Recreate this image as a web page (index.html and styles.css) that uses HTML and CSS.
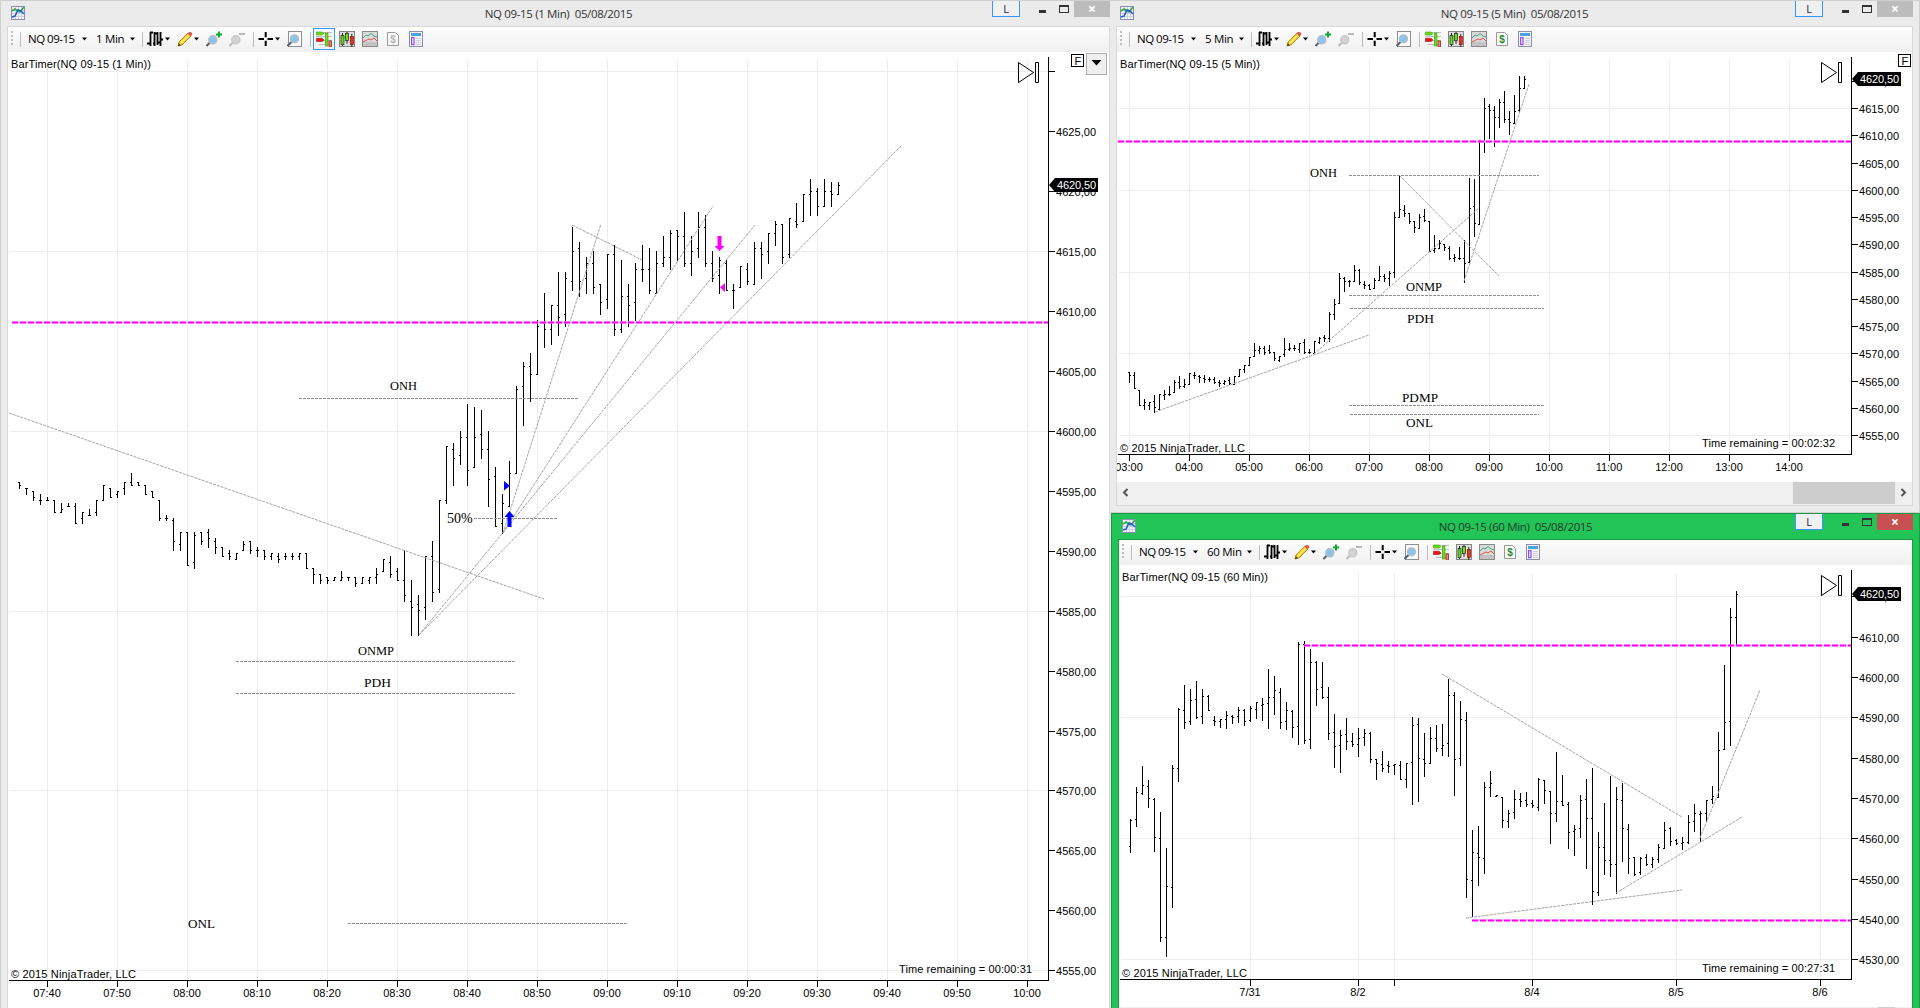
FILE: index.html
```html
<!DOCTYPE html>
<html lang="en">
<head>
    <meta charset="UTF-8">
    <title>NinjaTrader Charts</title>
    <link rel="stylesheet" href="styles.css">
</head>
<body>
    <!-- shared icons -->
    <svg class="defs" width="0" height="0">
        <symbol id="i-app" viewBox="0 0 14 14">
            <rect x="0.5" y="0.5" width="13" height="13" fill="#f4f4fb" stroke="#8c8cb4"/>
            <path d="M1 4.5H13M1 7.5H13M1 10.5H13M4.5 1V13M7.5 1V13M10.5 1V13" stroke="#cfcfe6" fill="none"/>
            <path d="M1 5L4 3L7 5L9 6L13 1" stroke="#2fae2f" stroke-width="1.6" fill="none"/>
            <path d="M1 11L4 10L7 4L10 5L13 8" stroke="#1f5fcf" stroke-width="1.6" fill="none"/>
        </symbol>
        <symbol id="i-arrow" viewBox="0 0 7 4"><path d="M1 0.5H6L3.5 3.5Z" fill="#000"/></symbol>
        <symbol id="i-bars" viewBox="0 0 16 16">
            <path d="M0 12.5H3M3 1.5H6M3.5 1V15M6 12.5H8M7.5 1V15M7.5 2.5H11M10.5 1V14M13.5 1V15M10 11.5H13M13 8.5H16" stroke="#000" stroke-width="1.8" fill="none"/>
        </symbol>
        <symbol id="i-pencil" viewBox="0 0 16 16">
            <path d="M1 15L2 11L11 2L14 5L5 14Z" fill="#f6cf1e" stroke="#a67c12" stroke-width="0.8"/>
            <path d="M3.5 12.5L12.3 3.6" stroke="#fff08a" stroke-width="1.2"/>
            <path d="M10.5 2.5L12 1Q14 0.5 15 2Q15.6 3.4 15 4L13.5 5.5Z" fill="#e0574d"/>
            <path d="M1 15L1.8 12L4 14.2Z" fill="#4a3b1c"/>
        </symbol>
        <symbol id="i-zoomin" viewBox="0 0 16 16">
            <path d="M0.5 15L4 11.5" stroke="#55606e" stroke-width="2"/>
            <circle cx="6.8" cy="8.8" r="4.1" fill="#8ec3ea" stroke="#b4bdc6" stroke-width="1.3"/>
            <path d="M10 3.5H16M13 0.5V6.5" stroke="#0aa82c" stroke-width="2"/>
        </symbol>
        <symbol id="i-zoomout" viewBox="0 0 16 16">
            <path d="M0.5 15L4 11.5" stroke="#bcbcbc" stroke-width="2"/>
            <circle cx="6.8" cy="8.8" r="4.1" fill="#d2d2d2" stroke="#c8c8c8" stroke-width="1.3"/>
            <path d="M10 3H16" stroke="#b9b9b9" stroke-width="2"/>
        </symbol>
        <symbol id="i-cross" viewBox="0 0 16 16">
            <path d="M0.5 8H6M9.5 8H15M7.7 1V6.3M7.7 9.7V15" stroke="#000" stroke-width="2"/>
        </symbol>
        <symbol id="i-frame" viewBox="0 0 16 16">
            <rect x="1.5" y="0.5" width="13" height="15" fill="#fafafa" stroke="#8f8f8f"/>
            <path d="M0.5 15L4.5 11" stroke="#55606e" stroke-width="2"/>
            <circle cx="7.5" cy="7.8" r="4" fill="#8ec3ea" stroke="#b4bdc6" stroke-width="1.3"/>
        </symbol>
        <symbol id="i-trader" viewBox="0 0 16 16">
            <path d="M3 1.5H16M0 5.5H16M3 9.5H16M3 13.5H16" stroke="#bdbdbd"/>
            <path d="M0.5 1H6L8 2.5L6 4H0.5Z" fill="#62e010" stroke="#3f9a10" stroke-width="0.6"/>
            <path d="M8 9L6 7.3H0.5V10.5H6Z" fill="#e81818" stroke="#9c1010" stroke-width="0.6"/>
            <rect x="9.4" y="2" width="2.6" height="13" fill="#62e010" stroke="#3f9a10" stroke-width="0.6"/>
            <rect x="13" y="10" width="2.4" height="6" fill="#f08080" stroke="#a02020" stroke-width="0.8"/>
        </symbol>
        <symbol id="i-candles" viewBox="0 0 16 16">
            <rect x="0.5" y="0.5" width="15" height="15" fill="#dcdcdc" stroke="#858585"/>
            <path d="M1 4.5H15M1 8.5H15M1 12.5H15" stroke="#fff"/>
            <path d="M3.5 2V15M8 1V13M12.8 3V16" stroke="#222"/>
            <rect x="2" y="4.5" width="3" height="9" fill="#62e010" stroke="#222" stroke-width="0.7"/>
            <rect x="6.5" y="2.5" width="3" height="7" fill="#62e010" stroke="#222" stroke-width="0.7"/>
            <rect x="11.3" y="5.5" width="3" height="8" fill="#f03020" stroke="#7c1010" stroke-width="0.7"/>
        </symbol>
        <symbol id="i-lines" viewBox="0 0 16 16">
            <rect x="0.5" y="0.5" width="15" height="15" fill="#dadada" stroke="#8a8a8a"/>
            <rect x="1" y="11" width="14" height="4" fill="#c2c2c2"/>
            <path d="M1 7L4 4L6 5L9 2.5L12 5L15 6" stroke="#3bab7c" fill="none"/>
            <path d="M1 11L4 9.5L7 8L9 9L12 7L15 10" stroke="#e05252" fill="none"/>
        </symbol>
        <symbol id="i-dollar" viewBox="0 0 16 16">
            <path d="M2.5 1.5H10.5L13.5 4.5V14.5H2.5Z" fill="#f8f8f8" stroke="#9a9a9a"/>
            <text class="dollar" x="8" y="12" text-anchor="middle">$</text>
        </symbol>
        <symbol id="i-props" viewBox="0 0 16 16">
            <rect x="1.5" y="0.5" width="13" height="15" fill="#f2f2f8" stroke="#8d90a8"/>
            <rect x="3" y="2" width="10" height="3" fill="#4aa3dd"/>
            <rect x="3.6" y="6.6" width="2.4" height="7" fill="#f1e4ff" stroke="#9252ee" stroke-width="1.2"/>
            <path d="M8 7.5H13M8 9.5H13M8 11.5H13M8 13.5H13" stroke="#d0d0dc"/>
        </symbol>
    </svg>

    <div class="desktop">
        <div class="window win-1min">
            <div class="titlebar">
                <svg class="app-icon"><use href="#i-app"/></svg>
                <div class="title">NQ 09-15 (1 Min)&nbsp; 05/08/2015</div>
                <div class="controls">
                    <span class="link-btn">L</span><span class="min"></span><span class="max"></span><span class="close">×</span>
                </div>
            </div>
            <div class="content">
                <div class="toolbar">
                    <span class="grip"></span><span class="sep first"></span>
                    <span class="instrument">NQ 09-15</span><svg class="arrow"><use href="#i-arrow"/></svg>
                    <span class="interval">1 Min</span><svg class="arrow"><use href="#i-arrow"/></svg>
                    <span class="sep"></span>
                    <svg class="icon bars-icon"><use href="#i-bars"/></svg><svg class="arrow"><use href="#i-arrow"/></svg>
                    <svg class="icon after"><use href="#i-pencil"/></svg><svg class="arrow"><use href="#i-arrow"/></svg>
                    <svg class="icon after"><use href="#i-zoomin"/></svg>
                    <svg class="icon next"><use href="#i-zoomout"/></svg>
                    <span class="sep wide"></span>
                    <svg class="icon"><use href="#i-cross"/></svg><svg class="arrow"><use href="#i-arrow"/></svg>
                    <svg class="icon after"><use href="#i-frame"/></svg>
                    <span class="sep wide last"></span>
                    <span class="selected"><svg class="icon"><use href="#i-trader"/></svg></span>
                    <svg class="icon next"><use href="#i-candles"/></svg>
                    <svg class="icon next"><use href="#i-lines"/></svg>
                    <svg class="icon next disabled"><use href="#i-dollar"/></svg>
                    <svg class="icon next"><use href="#i-props"/></svg>
                </div>
                <svg class="chart" id="chart1" width="1101" height="956" viewBox="8 52 1101 956"></svg>
            </div>
        </div>

        <div class="side">
            <div class="window win-5min">
                <div class="titlebar">
                    <svg class="app-icon"><use href="#i-app"/></svg>
                    <div class="title">NQ 09-15 (5 Min)&nbsp; 05/08/2015</div>
                    <div class="controls">
                        <span class="link-btn">L</span><span class="min"></span><span class="max"></span><span class="close">×</span>
                    </div>
                </div>
                <div class="content">
                    <div class="toolbar">
                        <span class="grip"></span><span class="sep first"></span>
                        <span class="instrument">NQ 09-15</span><svg class="arrow"><use href="#i-arrow"/></svg>
                        <span class="interval">5 Min</span><svg class="arrow"><use href="#i-arrow"/></svg>
                        <span class="sep"></span>
                        <svg class="icon bars-icon"><use href="#i-bars"/></svg><svg class="arrow"><use href="#i-arrow"/></svg>
                        <svg class="icon after"><use href="#i-pencil"/></svg><svg class="arrow"><use href="#i-arrow"/></svg>
                        <svg class="icon after"><use href="#i-zoomin"/></svg>
                        <svg class="icon next"><use href="#i-zoomout"/></svg>
                        <span class="sep wide"></span>
                        <svg class="icon"><use href="#i-cross"/></svg><svg class="arrow"><use href="#i-arrow"/></svg>
                        <svg class="icon after"><use href="#i-frame"/></svg>
                        <span class="sep wide last"></span>
                        <svg class="icon"><use href="#i-trader"/></svg>
                        <svg class="icon next"><use href="#i-candles"/></svg>
                        <svg class="icon next"><use href="#i-lines"/></svg>
                        <svg class="icon next money"><use href="#i-dollar"/></svg>
                        <svg class="icon next"><use href="#i-props"/></svg>
                    </div>
                    <svg class="chart" id="chart5" width="795" height="430" viewBox="1117 52 795 430"></svg>
                    <div class="scrollbar">
                        <svg class="chevron" viewBox="0 0 17 22"><path d="M10.5 7L7 10.5L10.5 14"/></svg>
                        <div class="thumb"></div>
                        <svg class="chevron" viewBox="0 0 17 22"><path d="M6.5 7L10 10.5L6.5 14"/></svg>
                    </div>
                </div>
            </div>

            <div class="window win-60min active">
                <div class="titlebar">
                    <svg class="app-icon"><use href="#i-app"/></svg>
                    <div class="title">NQ 09-15 (60 Min)&nbsp; 05/08/2015</div>
                    <div class="controls">
                        <span class="link-btn">L</span><span class="min"></span><span class="max"></span><span class="close">×</span>
                    </div>
                </div>
                <div class="content">
                    <div class="toolbar">
                        <span class="grip"></span><span class="sep first"></span>
                        <span class="instrument">NQ 09-15</span><svg class="arrow"><use href="#i-arrow"/></svg>
                        <span class="interval long">60 Min</span><svg class="arrow"><use href="#i-arrow"/></svg>
                        <span class="sep"></span>
                        <svg class="icon bars-icon"><use href="#i-bars"/></svg><svg class="arrow"><use href="#i-arrow"/></svg>
                        <svg class="icon after"><use href="#i-pencil"/></svg><svg class="arrow"><use href="#i-arrow"/></svg>
                        <svg class="icon after"><use href="#i-zoomin"/></svg>
                        <svg class="icon next"><use href="#i-zoomout"/></svg>
                        <span class="sep wide"></span>
                        <svg class="icon"><use href="#i-cross"/></svg><svg class="arrow"><use href="#i-arrow"/></svg>
                        <svg class="icon after"><use href="#i-frame"/></svg>
                        <span class="sep wide last"></span>
                        <svg class="icon"><use href="#i-trader"/></svg>
                        <svg class="icon next"><use href="#i-candles"/></svg>
                        <svg class="icon next"><use href="#i-lines"/></svg>
                        <svg class="icon next money"><use href="#i-dollar"/></svg>
                        <svg class="icon next"><use href="#i-props"/></svg>
                    </div>
                    <svg class="chart" id="chart60" width="793" height="442" viewBox="1119 565 793 442"></svg>
                    <div class="scrollbar">
                        <svg class="chevron" viewBox="0 0 17 22"><path d="M10.5 7L7 10.5L10.5 14"/></svg>
                        <div class="thumb short"></div>
                        <svg class="chevron" viewBox="0 0 17 22"><path d="M6.5 7L10 10.5L6.5 14"/></svg>
                    </div>
                </div>
            </div>
        </div>
    </div>
    <script src="charts.js"></script>
</body>
</html>
```
FILE: styles.css
```css
body {
    margin: 0;
    background-color: #ebebeb;
    font-family: "Open Sans", "Noto Sans", sans-serif;
    font-size: 12px;
    color: #000;
    overflow: hidden;
}

.defs {
    display: block;
}

.desktop {
    display: grid;
    grid-template-columns: 1110px 810px;
    height: 1008px;
    overflow: hidden;
}

.side {
    display: flex;
    flex-direction: column;
    height: 1008px;
    overflow: hidden;
}

.window {
    box-sizing: border-box;
    background-color: #ebebeb;
    border: 0 solid #cfcfcf;
    border-top-width: 1px;
    overflow: hidden;
}

.win-1min {
    border-left-width: 1px;
    padding-left: 6px;
    height: 1008px;
}

.win-5min {
    border-right-width: 1px;
    border-bottom-width: 1px;
    padding: 0 6px 6px;
    height: 513px;
    flex: none;
}

.win-60min {
    border-width: 1px;
    border-color: #1b9a45;
    background-color: #22c457;
    margin-left: 1px;
    padding: 0 6px;
    height: 540px;
    flex: none;
}

/* title bar */
.titlebar {
    display: grid;
    grid-template-columns: 1fr auto 1fr;
    height: 25px;
}

.app-icon {
    width: 14px;
    height: 14px;
    margin: 5px 0 0 4px;
}

.title {
    line-height: 26px;
    color: #333;
    font-size: 11.5px;
    letter-spacing: -0.35px;
    white-space: nowrap;
}

.controls {
    display: flex;
    justify-content: flex-end;
    height: 16px;
}

.link-btn {
    box-sizing: border-box;
    width: 28px;
    height: 16px;
    margin-right: 19px;
    border: 1px solid #3399ff;
    border-top: 0;
    background-color: #f0f0f0;
    color: #1e1e4a;
    font-size: 11px;
    line-height: 15px;
    text-align: center;
}

.min {
    width: 7px;
    height: 3px;
    margin: 9px 13px 0 0;
    background-color: #333;
}

.max {
    box-sizing: border-box;
    width: 10px;
    height: 8px;
    margin: 4px 5px 0 0;
    border: 1px solid #333;
    border-top-width: 2px;
}

.close {
    width: 36px;
    background-color: #bcbcbc;
    color: #fff;
    font-size: 14px;
    font-weight: bold;
    line-height: 15px;
    text-align: center;
}

.active .close {
    background-color: #c75050;
}

.active .title {
    color: #1c3a26;
}

.content {
    border: 1px solid #d9d9d9;
    background-color: #fff;
}

.active .content {
    border-color: #1b9a45;
}

/* toolbar */
.toolbar {
    box-sizing: border-box;
    display: flex;
    align-items: center;
    height: 25px;
    padding-bottom: 1px;
    background: linear-gradient(#fdfdfd, #f0f0f0);
}

.grip {
    width: 2px;
    height: 14px;
    margin: 0 7px 2px 3px;
    background: repeating-linear-gradient(#bdbdbd 0 2px, transparent 2px 4px);
}

.sep {
    width: 1px;
    height: 15px;
    margin: 0 4px 0 6px;
    background-color: #bdbdbd;
}

.sep.first {
    margin: 0 7px 0 0;
}

.sep.wide {
    margin-left: 8px;
}

.sep.last {
    margin-left: 7px;
    margin-right: 5px;
}

.instrument,
.interval {
    flex: none;
    font-size: 11.5px;
    letter-spacing: -0.5px;
    line-height: 16px;
    padding-bottom: 1px;
    white-space: nowrap;
}

.instrument {
    width: 52px;
    margin-right: 1px;
}

.interval {
    width: 33px;
    margin-left: 8px;
    letter-spacing: -0.3px;
}

.interval.long {
    width: 39px;
}

.arrow {
    flex: none;
    width: 7px;
    height: 4px;
}

.bars-icon + .arrow {
    margin-left: 1px;
}

.icon {
    flex: none;
    width: 16px;
    height: 16px;
}

.icon.after {
    margin-left: 6px;
}

.icon.next {
    margin-left: 7px;
}

.selected {
    margin: 0 -3px;
    padding: 2px;
    border: 1px solid #3399ff;
    height: 16px;
}

.dollar {
    font: bold 10px "Liberation Sans", Arial, sans-serif;
    fill: currentColor;
}

.disabled {
    color: #b5b5b5;
}

.money {
    color: #2c8a36;
}

/* scrollbar */
.scrollbar {
    display: flex;
    height: 23px;
    background-color: #f0f0f0;
}

.chevron {
    width: 17px;
    height: 22px;
    fill: none;
    stroke: #555;
    stroke-width: 2;
}

.thumb {
    width: 102px;
    height: 22px;
    margin-left: auto;
    background-color: #cdcdcd;
}

.thumb.short {
    width: 17px;
}

/* charts */
.chart {
    display: block;
    background-color: #fff;
    font: 11px "Liberation Sans", Arial, sans-serif;
}

.grid {
    stroke: #ededed;
    shape-rendering: crispEdges;
}

.axis {
    stroke: #000;
    fill: none;
    shape-rendering: crispEdges;
}

.bars {
    fill: #000;
    shape-rendering: crispEdges;
}

.trend {
    stroke: #a3a3a3;
    stroke-dasharray: 3 1;
}

.level {
    stroke: #909090;
    stroke-dasharray: 3 1;
    shape-rendering: crispEdges;
}

.pivot {
    stroke: #ff00ff;
    stroke-width: 2;
    stroke-dasharray: 6 2;
}

.pivot-bg {
    stroke: #ffc8ff;
    stroke-width: 2;
}

.note {
    font: 13px "Liberation Serif", "Times New Roman", serif;
}

.percent {
    font: 14px "Liberation Serif", "Times New Roman", serif;
}

.buy {
    fill: #0000ff;
}

.sell {
    fill: #ff00ff;
}

.last-price {
    fill: #fff;
}
```
FILE: charts.js
```js
// every bar is "high low open close", in chart pixels
const bars1 = `482 488 482 485,488 494 488 488,491 500 491 497,494 504 500 500,497 500 500 500,500 512 500 512,503 512 512 509,503 506 506 506,
503 523 506 523,512 523 518 512,509 515 515 515,500 515 512 500,485 500 500 485,488 497 488 497,491 497 494 491,482 494 488 482,
473 485 482 485,482 485 482 485,485 494 485 494,491 497 491 497,500 520 500 518,515 520 518 518,518 550 520 541,532 550 544 532,
532 565 532 565,532 568 562 535,532 544 532 541,529 547 532 538,538 553 541 547,547 556 547 556,550 559 553 556,553 559 559 553,
541 550 550 544,541 553 541 550,547 556 550 550,550 559 550 556,553 559 556 553,553 562 556 559,553 559 556 556,553 559 556 556,
553 559 556 553,553 568 553 568,568 583 568 574,574 583 574 580,577 583 577 580,577 580 580 577,571 580 580 577,577 580 577 577,
577 586 577 583,577 583 583 577,577 583 580 577,568 583 577 574,559 571 571 559,556 577 562 574,568 580 571 580,550 601 580 595,
580 635 601 607,595 635 604 610,556 619 607 556,541 601 556 592,500 592 589 500,446 503 500 446,443 485 449 458,431 464 455 437,
404 485 437 470,407 467 467 437,410 458 434 449,431 506 449 479,467 526 476 526,494 533 523 503,461 506 506 473,386 473 473 389,
362 425 386 366,353 401 366 374,320 374 374 326,293 347 323 329,305 344 329 305,272 335 305 317,272 326 314 278,227 290 281 251,
242 296 248 281,257 293 278 263,251 293 263 287,284 314 284 302,254 308 299 254,245 335 254 329,260 332 329 296,284 326 296 305,
263 320 302 269,245 281 269 269,248 293 269 290,251 293 293 263,236 266 263 257,230 269 257 233,230 260 230 236,212 266 236 263,
236 275 263 251,212 257 248 227,215 266 227 263,251 281 263 278,257 293 275 260,260 290 263 290,284 308 290 290,266 287 287 266,
263 284 269 281,242 284 284 248,242 278 248 254,233 263 251 233,221 245 233 224,224 263 224 257,218 257 254 218,203 227 221 224,
194 221 221 194,179 215 194 191,188 215 191 206,179 206 206 191,182 206 191 194,182 194 194 185`;

const bars5 = `372 382 372 375,372 388 375 388,390 405 390 405,399 409 405 402,402 409 405 402,395 412 401 407,394 409 409 394,390 399 395 394,
386 395 394 394,380 392 392 382,376 388 382 386,379 387 386 384,373 384 384 373,372 378 375 375,375 382 376 377,375 382 378 379,
377 381 379 379,377 383 379 382,380 386 382 383,380 384 383 381,377 384 380 383,376 384 384 376,369 376 376 369,365 372 369 365,
357 365 365 357,343 356 356 350,346 353 350 348,346 354 348 352,345 353 350 352,352 360 352 358,356 361 360 356,338 356 354 349,
343 350 349 348,345 350 348 348,343 352 349 343,339 353 342 352,349 353 352 352,341 353 353 341,337 343 342 338,335 341 337 338,
312 341 338 314,299 319 314 304,273 303 303 278,277 291 278 281,280 286 281 281,265 281 281 270,269 284 270 282,281 288 284 285,
284 289 285 289,278 288 288 280,266 280 280 276,274 281 276 278,271 285 278 273,212 277 272 217,176 217 217 209,205 216 210 213,
213 223 213 221,221 232 221 227,214 228 228 217,209 221 216 220,221 251 221 251,235 252 250 248,240 248 248 243,244 250 244 247,
246 259 248 258,254 261 258 257,247 259 258 258,240 282 258 263,178 262 262 208,179 236 206 223,140 224 224 140,98 152 141 108,
104 138 106 110,106 146 110 117,99 127 117 102,91 122 102 119,111 134 119 122,95 123 123 111,76 111 110 88,76 88 88 79`;

const bars60 = `819 852 846 820,787 826 819 792,766 794 793 785,780 807 786 798,798 851 799 837,812 941 838 937,848 956 937 886,765 907 887 768,
708 781 768 709,685 728 710 722,689 724 721 700,681 718 699 717,689 723 716 696,695 710 696 710,716 725 720 721,719 727 721 719,
711 728 719 715,715 723 716 717,707 722 716 710,709 725 710 721,706 721 720 708,702 718 709 702,698 720 705 704,669 728 703 697,
676 714 697 690,688 728 692 722,702 729 721 710,710 737 711 727,642 744 726 644,641 743 644 740,649 748 739 662,661 705 662 689,
662 698 687 697,687 739 697 733,714 767 732 746,730 772 745 735,718 749 734 741,733 746 741 744,728 756 744 738,729 745 737 733,
732 762 733 759,759 779 759 763,751 771 764 768,761 772 765 766,764 774 765 764,761 779 765 779,763 787 779 763,717 804 762 725,
718 801 724 758,733 776 759 763,727 763 763 738,725 751 738 748,724 755 748 745,679 756 743 695,692 795 695 759,701 765 758 719,
712 897 720 879,830 916 880 852,826 885 853 857,782 873 858 787,771 796 787 783,795 796 796 795,797 827 797 820,810 827 821 813,
790 818 812 799,793 806 799 801,792 806 800 804,800 807 803 805,778 810 807 779,780 803 780 790,791 843 791 813,752 821 813 801,
775 805 801 805,802 848 804 832,825 855 831 829,795 837 828 800,779 868 799 818,768 904 818 891,832 895 892 847,803 874 847 860,
776 876 860 864,787 893 864 799,783 861 800 828,824 873 829 858,857 875 857 874,857 874 872 858,854 865 857 864,857 867 864 859,
844 862 859 847,822 848 848 830,827 845 828 841,839 844 840 843,837 849 843 842,815 843 842 822,804 831 821 813,811 841 814 813,
800 821 813 800,786 803 799 796,732 797 797 750,665 749 749 722,608 745 721 617,591 644 617 594`;

const times = (from, count, step) => Array.from({ length: count }, (_, i) => {
    const m = from + i * step;
    return String(Math.floor(m / 60)).padStart(2, "0") + ":" + String(m % 60).padStart(2, "0");
});

const charts = [
    {
        id: "chart1", name: "BarTimer(NQ 09-15 (1 Min))", nameWidth: 140, remaining: "00:00:31", remainX: 899, remainY: 973,
        left: 9, top: 57, axisX: 1048, axisY: 980, labelY: 997,
        base: 4555, baseY: 970.2, scale: 11.985, from: 4555, to: 4630, step: 5, skipLabel: 4630, lastY: 185,
        ticks: times(460, 15, 10).map((t, i) => [47 + i * 70, t]),
        bars: bars1, barX: 19, barStep: 7,
        pivots: [[12, 322]],
        levels: [[299, 579, 398], [474, 557, 518], [236, 515, 661], [236, 515, 693], [348, 627, 923]],
        notes: [["ONH", 390, 390], ["ONMP", 358, 655], ["PDH", 364, 687], ["ONL", 188, 928]],
        trends: [[9, 413, 544, 599], [503, 533, 601, 224], [503, 533, 713, 206], [419, 635, 755, 225], [419, 635, 901, 146], [572, 225, 642, 260]]
    },
    {
        id: "chart5", name: "BarTimer(NQ 09-15 (5 Min))", nameWidth: 140, remaining: "00:02:32", remainX: 1702, remainY: 447,
        left: 1118, top: 57, axisX: 1851, axisY: 454, labelY: 471,
        base: 4555, baseY: 435, scale: 5.45, from: 4555, to: 4620, step: 5, lastY: 79,
        ticks: times(180, 12, 60).map((t, i) => [1129 + i * 60, t]),
        bars: bars5, barX: 1129, barStep: 5,
        pivots: [[1118, 141]],
        levels: [[1349, 1539, 175], [1349, 1539, 295], [1350, 1544, 308], [1349, 1544, 405], [1350, 1539, 414]],
        notes: [["ONH", 1310, 177], ["ONMP", 1406, 291], ["PDH", 1407, 323], ["PDMP", 1402, 402], ["ONL", 1406, 427]],
        trends: [[1155, 412, 1369, 335], [1314, 354, 1479, 208], [1399, 175, 1499, 276], [1464, 281, 1529, 84]]
    },
    {
        id: "chart60", name: "BarTimer(NQ 09-15 (60 Min))", nameWidth: 146, remaining: "00:27:31", remainX: 1702, remainY: 972,
        left: 1120, top: 570, axisX: 1851, axisY: 979, labelY: 996,
        base: 4530, baseY: 959.3, scale: 4.033, from: 4530, to: 4620, step: 10, lastY: 594,
        ticks: [[1250, "7/31"], [1358, "8/2"], [1394, ""], [1532, "8/4"], [1676, "8/5"], [1820, "8/6"]],
        bars: bars60, barX: 1130, barStep: 6,
        pivots: [[1304, 645], [1472, 920]],
        levels: [],
        notes: [],
        trends: [[1442, 674, 1682, 817], [1466, 918, 1682, 890], [1616, 893, 1742, 817], [1700, 838, 1760, 690]]
    }
];

function line(cls, x1, y1, x2, y2) {
    return `<line class="${cls}" x1="${x1}" y1="${y1}" x2="${x2}" y2="${y2}"/>`;
}

function drawBars(data, x0, step) {
    let d = "";
    data.split(",").forEach((bar, i) => {
        const [high, low, open, close] = bar.trim().split(" ").map(Number);
        const x = x0 + i * step;
        d += `M${x} ${high}h1v${low - high + 1}h-1z`;
        d += `M${x - 1} ${open}h1v1h-1zM${x + 1} ${close}h1v1h-1z`;
    });
    return `<path class="bars" d="${d}"/>`;
}

function drawChart(c) {
    const ax = c.axisX + 0.5;
    const ay = c.axisY + 0.5;
    let out = "";
    let labels = "";

    c.ticks.forEach(([x, text]) => {
        out += line("grid", x + 0.5, c.top + 3, x + 0.5, ay);
        labels += line("axis", x + 0.5, ay, x + 0.5, ay + 6);
        labels += `<text x="${x}" y="${c.labelY}" text-anchor="middle">${text}</text>`;
    });
    for (let p = c.from; p <= c.to; p += c.step) {
        const y = Math.round(c.baseY - (p - c.base) * c.scale) + 0.5;
        // grid lines are three labels apart
        if ((p - c.from) / c.step % 3 === 0) {
            out += line("grid", c.left + 1, y, ax, y);
        }
        labels += line("axis", ax, y, ax + 6, y);
        if (p !== c.skipLabel) {
            labels += `<text x="${c.axisX + 8}" y="${y + 4}" textLength="40">${p},00</text>`;
        }
    }

    out += `<text x="${c.left + 2}" y="${c.top + 11}" textLength="${c.nameWidth}">${c.name}</text>`;
    out += `<text x="${c.left + 2}" y="${c.axisY - 2}" textLength="125">© 2015 NinjaTrader, LLC</text>`;
    out += `<text x="${c.remainX}" y="${c.remainY}" textLength="133">Time remaining = ${c.remaining}</text>`;

    out += drawBars(c.bars, c.barX, c.barStep);
    c.trends.forEach(t => out += line("trend", ...t));
    c.levels.forEach(([x1, x2, y]) => out += line("level", x1, y + 0.5, x2, y + 0.5));
    c.pivots.forEach(([x, y]) => {
        out += line("pivot-bg", x, y + 0.5, ax, y + 0.5);
        out += line("pivot", x, y + 0.5, ax, y + 0.5);
    });
    c.notes.forEach(([text, x, y]) => {
        out += `<text class="note" x="${x}" y="${y}" textLength="${text.length * 9}" lengthAdjust="spacingAndGlyphs">${text}</text>`;
    });

    out += `<path class="axis" d="M${ax} ${c.top}V${ay}H${c.left}"/>` + labels;
    out += `<path d="M${ax + 0.5} ${c.lastY}l6 -7h43v14h-43z"/>`;
    out += `<text class="last-price" x="${c.axisX + 9}" y="${c.lastY + 4}" textLength="39">4620,50</text>`;

    // go-to-last-bar button
    const px = c.axisX - 29.5;
    const py = c.top + 5.5;
    out += `<path d="M${px} ${py}v20l15 -10zM${px + 17} ${py}h3v20h-3z" fill="none" stroke="#000"/>`;

    document.getElementById(c.id).innerHTML = out;
}

charts.forEach(drawChart);

// trade markers and chart buttons
document.getElementById("chart1").innerHTML += `
    <text class="percent" x="447" y="523">50%</text>
    <path class="buy" d="M509.5 511l5 6h-3v10h-4v-10h-3zM504 481l6 4.7l-6 4.7z"/>
    <path class="sell" d="M719.5 251l5 -5h-3v-10h-4v10h-3zM725 283v9l-5 -4.5z"/>
    <rect x="1071.5" y="54.5" width="12" height="12" fill="#fff" stroke="#000"/>
    <text x="1074.5" y="65">F</text>
    <rect x="1086.5" y="53.5" width="20" height="21" fill="#f0f0f0" stroke="#adadad"/>
    <path d="M1091.5 60h10l-5 5.5z"/>`;
document.getElementById("chart5").innerHTML += `
    <rect x="1898.5" y="54.5" width="12" height="12" fill="#fff" stroke="#000"/>
    <text x="1901.5" y="65">F</text>`;
```
